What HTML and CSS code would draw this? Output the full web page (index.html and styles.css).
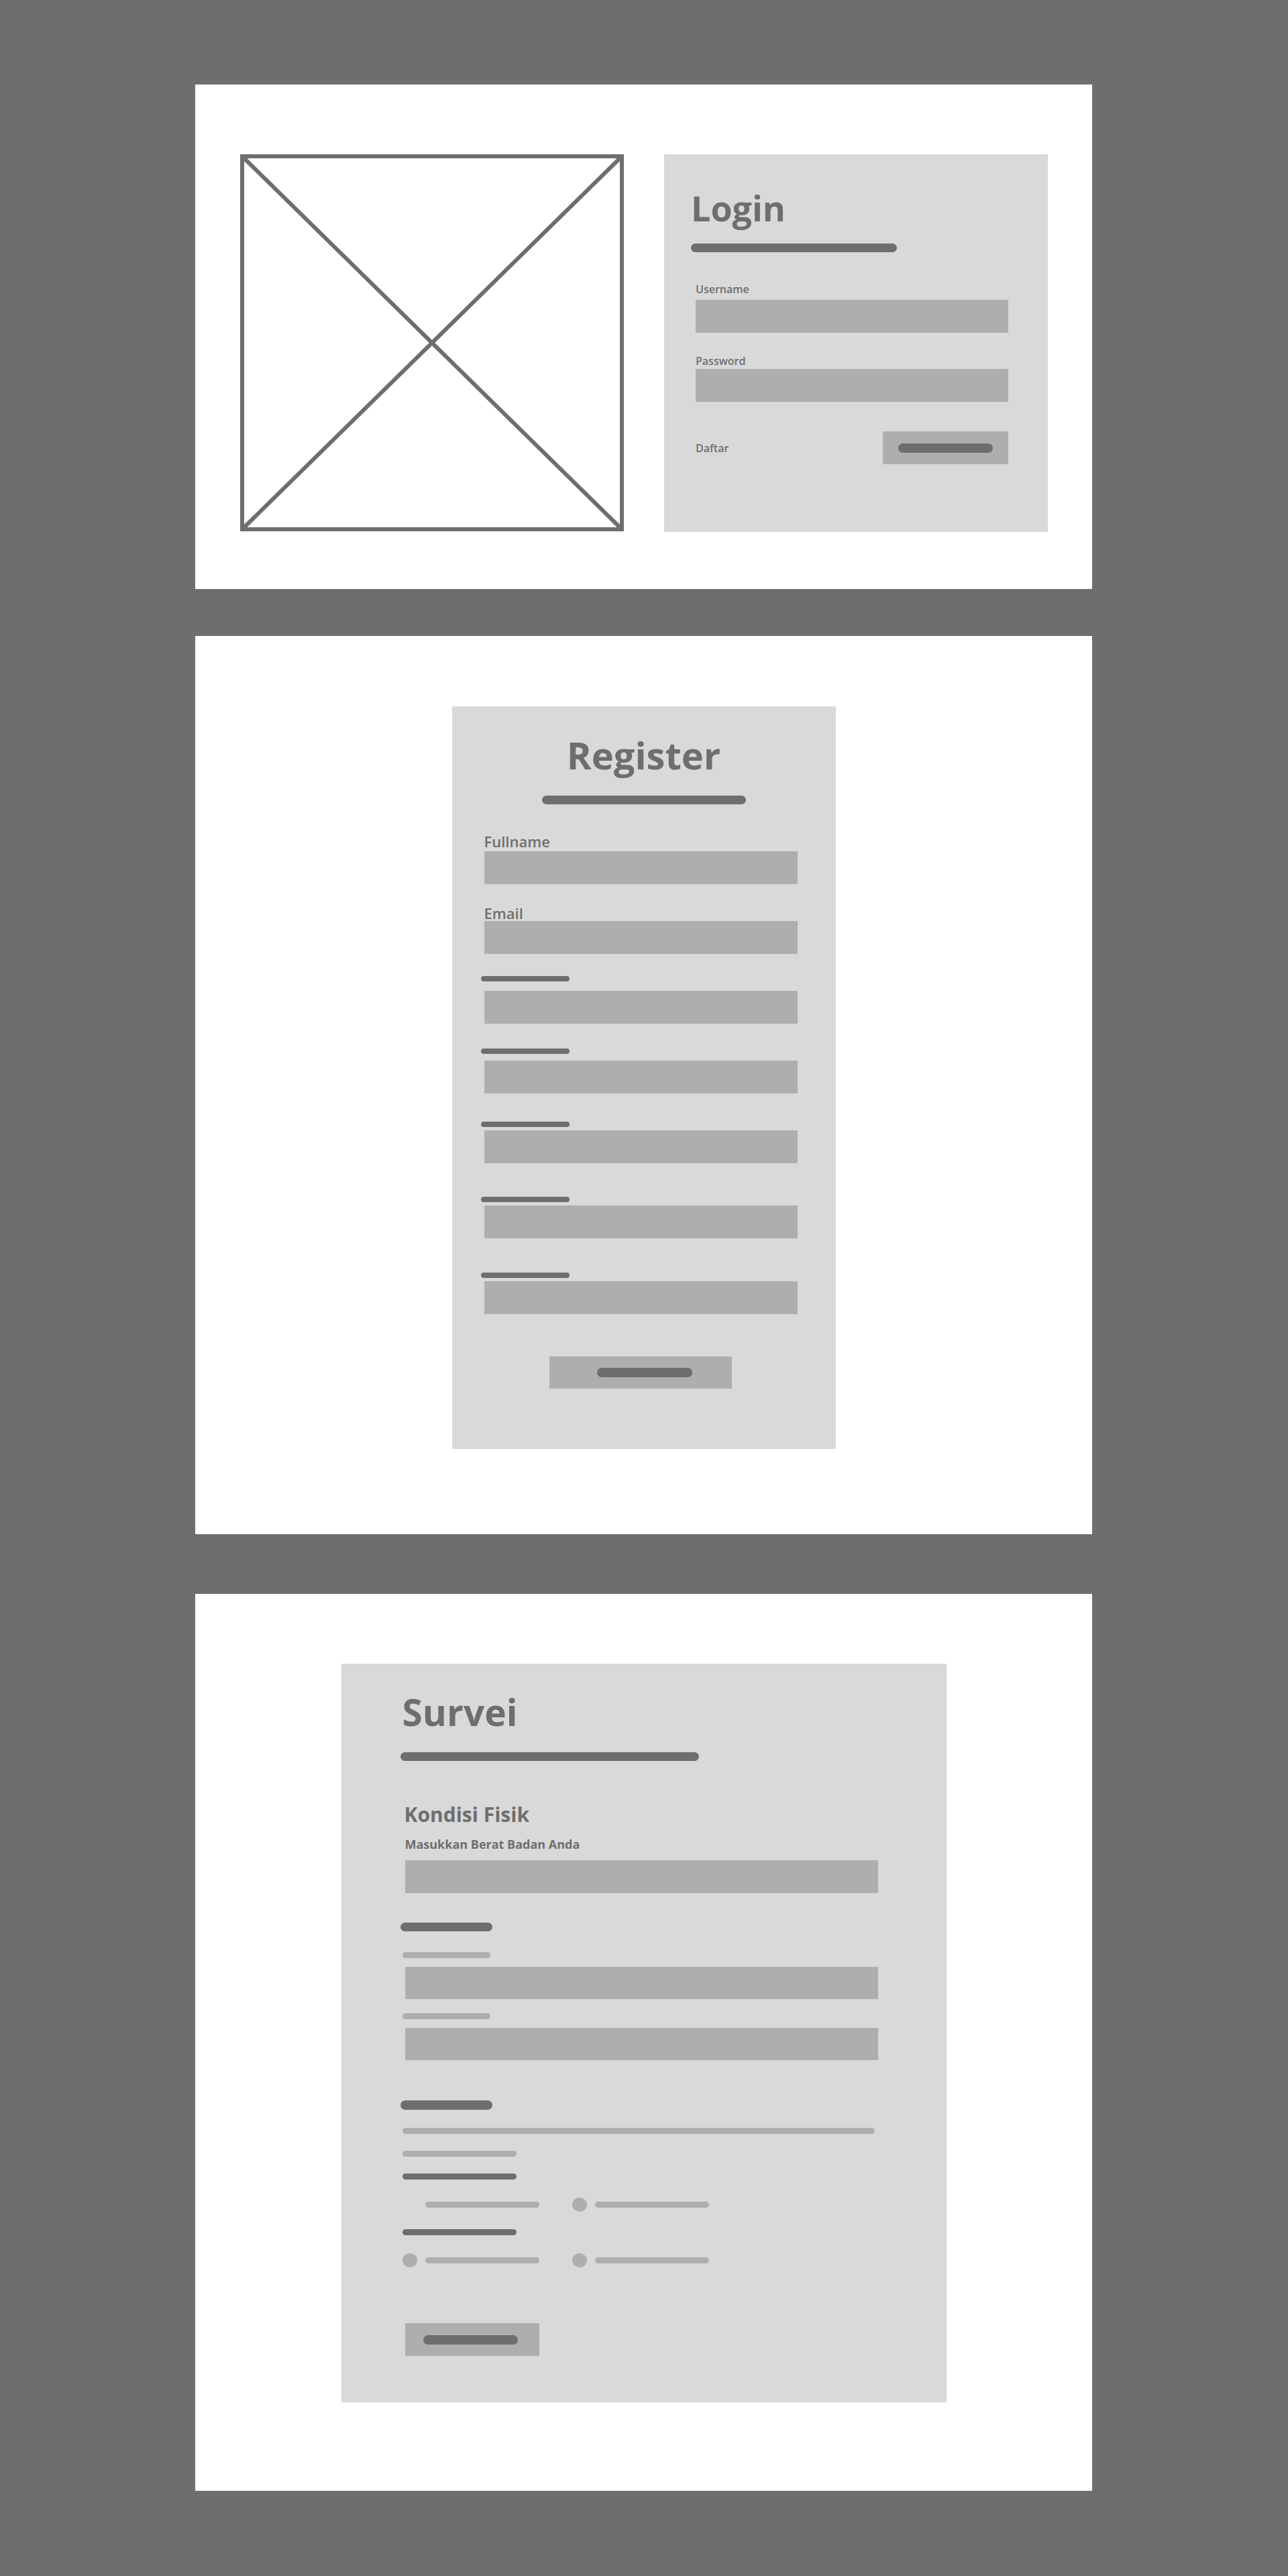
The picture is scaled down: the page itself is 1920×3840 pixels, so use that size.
FILE: index.html
```html
<!DOCTYPE html>
<html lang="id">
<head>
<meta charset="utf-8">
<title>Wireframe</title>
<link rel="stylesheet" href="styles.css">
</head>
<body>
<main class="page">
  <section class="frame frame-login">
    <div class="placeholder">
      <svg width="572" height="562" viewBox="0 0 572 562">
        <rect x="3" y="3" width="566" height="556" fill="none" stroke="#6e6e6e" stroke-width="6"/>
        <line x1="4" y1="4" x2="568" y2="558" stroke="#6e6e6e" stroke-width="6"/>
        <line x1="568" y1="4" x2="4" y2="558" stroke="#6e6e6e" stroke-width="6"/>
      </svg>
    </div>
    <div class="panel panel-login">
      <h1 class="title title-login">Login</h1>
      <div class="bar bar-title-login"></div>
      <div class="login-form">
        <div class="label-sm lf-user">Username</div>
        <div class="input lf-user-input"></div>
        <div class="label-sm lf-pass">Password</div>
        <div class="input lf-pass-input"></div>
        <div class="login-row">
          <span class="label-sm">Daftar</span>
          <div class="btn btn-login"><span class="btn-bar"></span></div>
        </div>
      </div>
    </div>
  </section>

  <section class="frame frame-register">
    <div class="panel panel-register">
      <h1 class="title title-register">Register</h1>
      <div class="bar bar-title-register"></div>
      <div class="reg-fields">
        <div class="label-md rf-full">Fullname</div>
        <div class="input rf-full-input"></div>
        <div class="label-md rf-email">Email</div>
        <div class="input rf-email-input"></div>
        <div class="bar bar-label rb1"></div>
        <div class="input ri1"></div>
        <div class="bar bar-label rb2"></div>
        <div class="input ri2"></div>
        <div class="bar bar-label rb3"></div>
        <div class="input ri3"></div>
        <div class="bar bar-label rb4"></div>
        <div class="input ri4"></div>
        <div class="bar bar-label rb5"></div>
        <div class="input ri5"></div>
        <div class="btn btn-register"><span class="btn-bar"></span></div>
      </div>
    </div>
  </section>

  <section class="frame frame-survey">
    <div class="panel panel-survey">
      <h1 class="title title-survey">Survei</h1>
      <div class="bar bar-title-survey"></div>
      <h2 class="section-title">Kondisi Fisik</h2>
      <div class="question">Masukkan Berat Badan Anda</div>
      <div class="input sv-input sv-in1"></div>
      <div class="bar bar-section sv-sec1"></div>
      <div class="bar bar-light sv-l1"></div>
      <div class="input sv-input sv-in2"></div>
      <div class="bar bar-light sv-l2"></div>
      <div class="input sv-input sv-in3"></div>
      <div class="bar bar-section sv-sec2"></div>
      <div class="bar bar-light bar-full"></div>
      <div class="bar bar-light bar-short sv-s1"></div>
      <div class="bar bar-dark-thin sv-d1"></div>
      <div class="radio-row sv-r1">
        <span class="radio radio-empty"></span><span class="radio-label"></span>
        <span class="radio"></span><span class="radio-label"></span>
      </div>
      <div class="bar bar-dark-thin sv-d2"></div>
      <div class="radio-row sv-r2">
        <span class="radio"></span><span class="radio-label"></span>
        <span class="radio"></span><span class="radio-label"></span>
      </div>
      <div class="btn btn-survey"><span class="btn-bar"></span></div>
    </div>
  </section>
</main>
</body>
</html>
```

FILE: styles.css
```css
* { box-sizing: border-box; }

html, body {
  margin: 0;
  padding: 0;
  background: #6e6e6e;
  font-family: "Open Sans", "Noto Sans", sans-serif;
  color: #6e6e6e;
}

.page {
  padding: 126px 0 0 291px;
  display: flex;
  flex-direction: column;
  align-items: flex-start;
}

.frame {
  width: 1337px;
  background: #ffffff;
}

.frame-login {
  height: 752px;
  padding: 104px 0 0 67px;
  display: flex;
  gap: 60px;
  align-items: flex-start;
}

.frame-register {
  height: 1339px;
  margin-top: 70px;
  padding-top: 105px;
}

.frame-survey {
  height: 1337px;
  margin-top: 89px;
  padding-top: 104px;
}

.placeholder { width: 572px; height: 562px; }
.placeholder svg { display: block; }

.panel { background: #d9d9d9; }

.input { background: #aeaeae; height: 49px; }

.bar { background: #6e6e6e; border-radius: 8px; }

.title {
  margin: 0;
  font-weight: 700;
}

.btn {
  background: #aeaeae;
  height: 49px;
  display: flex;
  align-items: center;
}
.btn-bar {
  display: block;
  height: 14px;
  border-radius: 7px;
  background: #6e6e6e;
}

/* ---------- Login ---------- */
.panel-login {
  width: 572px;
  height: 563px;
  padding: 54px 0 0 40px;
}
.title-login { font-size: 52px; line-height: 52px; }
.bar-title-login { width: 307px; height: 13px; margin-top: 27px; }
.login-form { margin-left: 7px; width: 466px; }
.label-sm { font-size: 16px; line-height: 16px; font-weight: 600; }
.lf-user { margin-top: 47px; }
.lf-user-input { margin-top: 8px; }
.lf-pass { margin-top: 34px; }
.lf-pass-input { margin-top: 4px; }
.login-row {
  margin-top: 44px;
  display: flex;
  justify-content: space-between;
  align-items: center;
}
.btn-login { width: 187px; justify-content: center; }
.btn-login .btn-bar { width: 141px; }

/* ---------- Register ---------- */
.panel-register {
  width: 572px;
  height: 1107px;
  margin: 0 auto;
  padding-top: 44px;
}
.title-register { font-size: 56px; line-height: 56px; text-align: center; }
.bar-title-register { width: 304px; height: 13px; margin: 33px auto 0; }
.reg-fields { margin-left: 48px; width: 467px; }
.label-md { font-size: 22px; line-height: 22px; font-weight: 600; }
.rf-full { margin-top: 44px; }
.rf-full-input { margin-top: 4px; }
.rf-email { margin-top: 32px; }
.rf-email-input { margin-top: 1px; }
.bar-label { width: 132px; height: 8px; border-radius: 4px; margin-left: -5px; }
.rb1 { margin-top: 33px; }
.ri1 { margin-top: 14px; }
.rb2 { margin-top: 37px; }
.ri2 { margin-top: 10px; }
.rb3 { margin-top: 42px; }
.ri3 { margin-top: 5px; }
.rb4 { margin-top: 50px; }
.ri4 { margin-top: 5px; }
.rb5 { margin-top: 51px; }
.ri5 { margin-top: 5px; }
.btn-register {
  width: 272px;
  height: 48px;
  margin: 63px 0 0 97px;
  padding-left: 71px;
}
.btn-register .btn-bar { width: 142px; }

/* ---------- Survey ---------- */
.panel-survey {
  width: 902px;
  height: 1101px;
  margin: 0 auto;
  padding: 44px 0 0 88px;
}
.title-survey { font-size: 55px; line-height: 55px; margin-left: 3px; }
.bar-title-survey { width: 445px; height: 13px; margin-top: 33px; }
.section-title {
  margin: 65px 0 0 6px;
  font-size: 30px;
  line-height: 30px;
  font-weight: 700;
}
.question {
  margin: 20px 0 0 7px;
  font-size: 18px;
  line-height: 18px;
  font-weight: 700;
}
.sv-input { margin-left: 7px; width: 705px; }
.sv-in1 { margin-top: 15px; }
.bar-section { width: 137px; height: 13px; }
.sv-sec1 { margin-top: 44px; }
.bar-light { background: #aeaeae; height: 9px; border-radius: 5px; margin-left: 3px; }
.sv-l1 { width: 131px; margin-top: 31px; }
.sv-in2 { margin-top: 13px; height: 48px; }
.sv-l2 { width: 131px; margin-top: 21px; }
.sv-in3 { margin-top: 13px; height: 48px; }
.sv-sec2 { margin-top: 60px; height: 14px; }
.bar-full { width: 704px; margin-top: 27px; }
.bar-short { width: 170px; }
.sv-s1 { margin-top: 25px; }
.bar-dark-thin { width: 170px; height: 9px; border-radius: 5px; margin-left: 3px; }
.sv-d1 { margin-top: 25px; }
.sv-d2 { margin-top: 26px; }
.radio-row {
  margin: 27px 0 0 3px;
  height: 21px;
  display: flex;
  align-items: center;
}
.radio {
  width: 22px;
  height: 21px;
  border-radius: 50%;
  background: #aeaeae;
  margin-right: 12px;
}
.radio-empty { background: transparent; }
.radio-label {
  width: 170px;
  height: 9px;
  border-radius: 5px;
  background: #aeaeae;
  margin-right: 49px;
}
.btn-survey {
  width: 200px;
  margin: 83px 0 0 7px;
  padding-left: 27px;
}
.btn-survey .btn-bar { width: 141px; }
```
